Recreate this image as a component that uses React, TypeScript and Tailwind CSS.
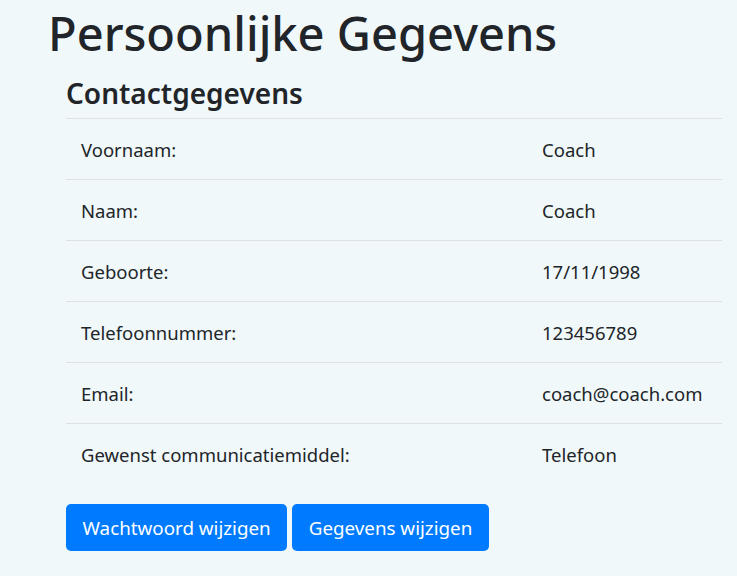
const rows: [string, string][] = [
  ["Voornaam:", "Coach"],
  ["Naam:", "Coach"],
  ["Geboorte:", "17/11/1998"],
  ["Telefoonnummer:", "123456789"],
  ["Email:", "coach@coach.com"],
  ["Gewenst communicatiemiddel:", "Telefoon"],
];

export default function App() {
  return (
    <div
      className="min-h-[576px] bg-[#f0f8fa] text-[#212529]"
      style={{ fontFamily: '"Noto Sans", "Open Sans", sans-serif' }}
    >
      <h1 className="pl-[48px] pt-[3px] text-[47px] font-medium leading-[60px]">
        Persoonlijke Gegevens
      </h1>

      <div className="pl-[66px] pr-[15px]">
        <h2 className="mt-[13px] mb-[8px] text-[28px] font-semibold leading-[34px]">
          Contactgegevens
        </h2>

        <table className="w-full border-collapse text-[18.5px]">
          <tbody>
            {rows.map(([label, value]) => (
              <tr key={label} className="border-t border-[#dee2e6]">
                <td className="h-[61px] w-[461px] px-[15px] pt-[2px] align-middle">
                  {label}
                </td>
                <td className="px-[15px] pt-[2px] align-middle">{value}</td>
              </tr>
            ))}
          </tbody>
        </table>

        <div className="mt-[19px] flex gap-[5px]">
          <button className="h-[47px] rounded-[5px] bg-[#007bff] px-[16.5px] pt-[3px] text-[18.8px] text-white">
            Wachtwoord wijzigen
          </button>
          <button className="h-[47px] rounded-[5px] bg-[#007bff] px-[16.5px] pt-[3px] text-[18.8px] text-white">
            Gegevens wijzigen
          </button>
        </div>
      </div>
    </div>
  );
}
